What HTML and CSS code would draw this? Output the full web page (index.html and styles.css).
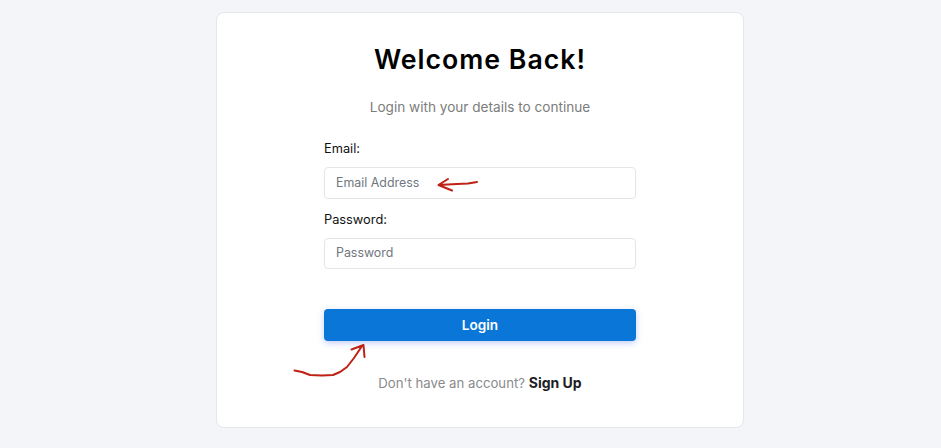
FILE: index.html
```html
<!DOCTYPE html>
<html lang="en">
<head>
    <meta charset="UTF-8">
    <meta name="viewport" content="width=device-width, initial-scale=1.0">
    <title>Login</title>

    <link rel="stylesheet" href="styles.css">
</head>
<body>
    <div class="login-card">
        <h1>Welcome Back!</h1>
        <p class="subtitle">Login with your details to continue</p>

        <form class="login-form">
            <label for="email">Email:</label>
            <input type="email" id="email" placeholder="Email Address">

            <label for="password">Password:</label>
            <input type="password" id="password" placeholder="Password">

            <button type="button" class="login-btn">Login</button>
        </form>

        <p class="signup-text">Don't have an account? <a href="#">Sign Up</a></p>
    </div>

    <!-- red marks drawn on top of the screenshot -->
    <svg class="scribble" width="941" height="448" viewBox="0 0 941 448" fill="none">
        <path d="M477 182L468 183.500L457 184L438.500 185M438.500 185L448 179M438.500 185L452 190.500"/>
        <path d="M294.500 370.500L302 372L310 375L322 375.500L333 375L340 372L347 367L354 358L362 346M363.500 345L351.500 349.500M363.500 345L364.500 357"/>
    </svg>
</body>
</html>
```

FILE: styles.css
```css
/* Page background */
body {
    margin: 0;
    height: 448px;
    overflow: hidden;
    background-color: #f4f5f9;
    font-family: Inter, "Liberation Sans", sans-serif;
    display: flex;
    justify-content: center;
    padding: 12px 0 0 19px;
    box-sizing: border-box;
}

/* Card holding the form */
.login-card {
    width: 528px;
    height: 416px;
    box-sizing: border-box;
    background-color: #fff;
    border: 1px solid #e6e7eb;
    border-radius: 8px;
    padding: 29px 107px 0;
    text-align: center;
}

.login-card h1 {
    margin: 0;
    font-size: 26.7px;
    line-height: 34px;
    font-weight: 600;
    letter-spacing: 1px;
    color: #000;
}

.subtitle {
    margin: 21px 0 0;
    font-size: 13.6px;
    line-height: 20px;
    color: #7c7c7c;
}

/* Form fields */
.login-form {
    display: flex;
    flex-direction: column;
    margin-top: 21px;
    text-align: left;
}

.login-form label {
    font-size: 12.8px;
    line-height: 22px;
    color: #111;
    margin-bottom: 7px;
}

.login-form input {
    height: 32px;
    box-sizing: border-box;
    border: 1px solid #e3e5e9;
    border-radius: 4px;
    padding: 0 11px 2px;
    margin-bottom: 10px;
    font-family: inherit;
    font-size: 12.4px;
    color: #111;
    outline: none;
}

.login-form input::placeholder {
    color: #6f7780;
    opacity: 1;
}

.login-form input#password {
    height: 31px;
}

.login-btn {
    height: 32px;
    margin-top: 30px;
    border: none;
    border-radius: 4px;
    background-color: #0a76d8;
    color: #fff;
    font-family: inherit;
    font-size: 13.6px;
    font-weight: 600;
    box-shadow: 0 2px 6px rgba(60, 90, 240, 0.3);
    cursor: pointer;
}

.signup-text {
    margin: 32px 0 0;
    font-size: 13.2px;
    line-height: 20px;
    color: #8a8a8a;
}

.signup-text a {
    color: #1d1d22;
    font-size: 14px;
    font-weight: 700;
    text-decoration: none;
}

/* Annotation overlay */
.scribble {
    position: absolute;
    top: 0;
    left: 0;
    pointer-events: none;
}

.scribble path {
    stroke: #bf2114;
    stroke-width: 2;
    stroke-linecap: round;
    stroke-linejoin: round;
}
```
